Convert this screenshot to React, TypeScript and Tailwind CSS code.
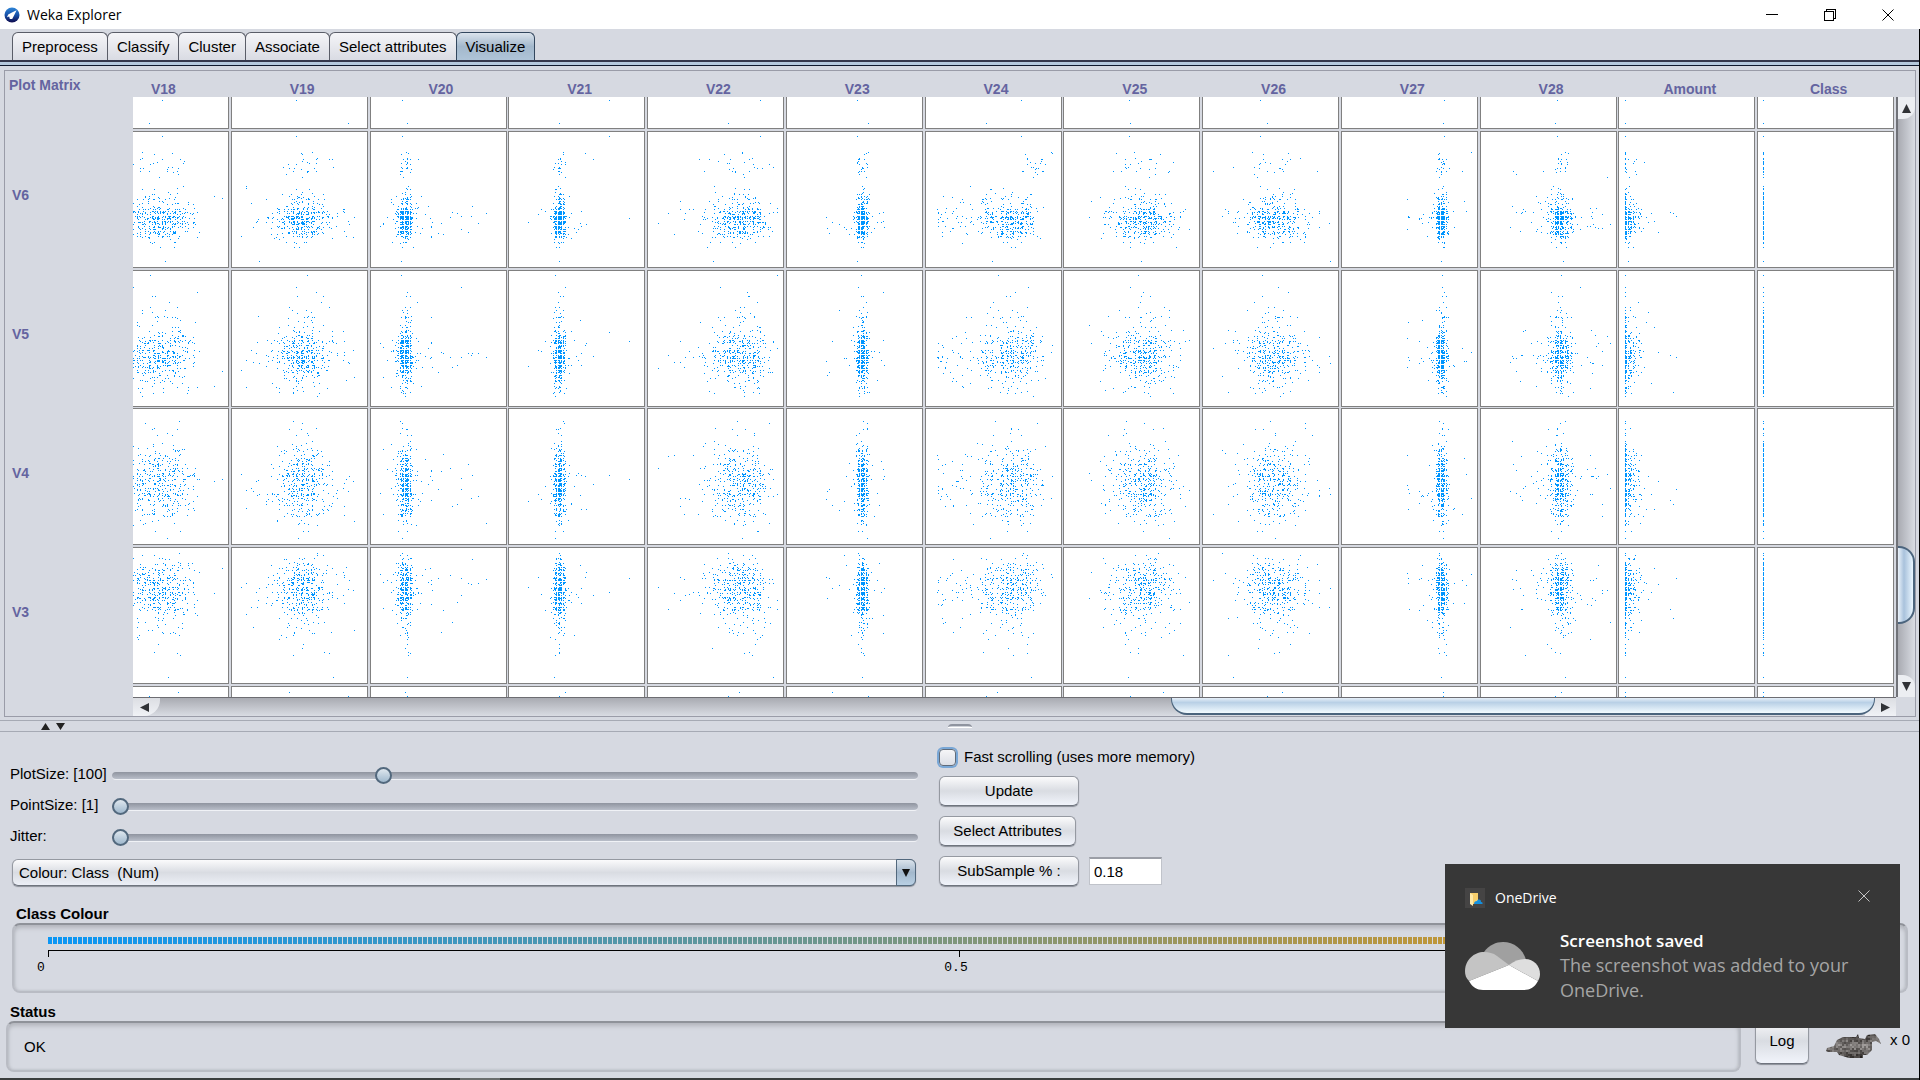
import React, { useMemo, useState } from "react";

const TABS = ["Preprocess", "Classify", "Cluster", "Associate", "Select attributes", "Visualize"];
const COLUMNS = ["V18", "V19", "V20", "V21", "V22", "V23", "V24", "V25", "V26", "V27", "V28", "Amount", "Class"];
const ROWS = ["V6", "V5", "V4", "V3"];

const PITCH = 138.75;
const VIEW_W = 1762;
const VIEW_H = 600;

function makeRandom(seed: number) {
  let s = seed;
  const uniform = () => {
    s = (s + 0x6d2b79f5) | 0;
    let t = Math.imul(s ^ (s >>> 15), 1 | s);
    t = (t + Math.imul(t ^ (t >>> 7), 61 | t)) ^ t;
    return ((t ^ (t >>> 14)) >>> 0) / 4294967296;
  };
  const normal = () => Math.sqrt(-2 * Math.log(uniform() + 1e-9)) * Math.cos(2 * Math.PI * uniform());
  return { uniform, normal };
}

// One entry per sampled record: its position inside a cell along every column and every row attribute.
function buildRecords() {
  const { uniform: u, normal: n } = makeRandom(2024);
  const tailed = (mean: number, sd: number, wide: number, share: number) =>
    mean + n() * (u() < share ? wide : sd);
  const records: { x: number[]; y: number[] }[] = [];
  for (let i = 0; i < 450; i++) {
    const high6 = u() < 0.055;
    const v24 = high6
      ? 112 + n() * 7
      : (() => {
          const k = u();
          if (k < 0.12) return 12 + u() * 38;
          if (k < 0.3) return 64 + n() * 5;
          if (k < 0.66) return 82 + n() * 6;
          return 100 + n() * 7;
        })();
    const x = [
      tailed(u() < 0.5 ? 58 : 78, 13, 34, 0.12),
      tailed(71, 13, 30, 0.18),
      tailed(36, 4, 22, 0.08) + (u() < 0.015 ? u() * 90 : 0),
      tailed(52, 3, 18, 0.05) + (u() < 0.015 ? u() * 80 : 0),
      u() < 0.02 ? 6 + u() * 50 : Math.min(130, (u() < 0.4 ? 80 : 101) + n() * 11),
      tailed(77, 3, 20, 0.05),
      v24,
      tailed(80, 16, 28, 0.13),
      tailed(u() < 0.6 ? 65 : 80, 11, 30, 0.17),
      tailed(101, 3, 20, 0.07),
      tailed(81, 5, 26, 0.14),
      8 + (u() < 0.55 ? 0 : -Math.log(u() + 1e-4) * 5) + (u() < 0.03 ? u() * 50 : 0),
      6.3,
    ];
    const y = [
      i === 0 ? 6 : i === 1 ? 131 : high6 ? 34 + n() * 7 : 90 + n() * 10 - (u() < 0.13 ? u() * 28 : 0),
      i === 2 ? 6 : 88 + n() * 14 - (u() < 0.12 ? u() * 55 : 0),
      i === 3 ? 131 : 76 + n() * 18 - (u() < 0.06 ? u() * 50 : 0),
      i === 4 ? 131 : 42 + n() * 16 + (u() < 0.15 ? u() * 50 : 0),
    ];
    records.push({ x, y });
  }
  return records;
}

const snap = (v: number) => Math.floor(Math.floor(v / 1.25) * 1.25);

function PlotMatrix() {
  const { dots, frames } = useMemo(() => {
    const records = buildRecords();
    const tops = [-105, 34, 173, 311, 450, 589];
    const frames: { x: number; y: number }[] = [];
    let dots = "";
    COLUMNS.forEach((_, c) => {
      const left = Math.round(-41 + c * PITCH);
      tops.forEach((top) => frames.push({ x: left, y: top }));
      const dot = (px: number, py: number) => {
        dots += `M${left + snap(px)} ${py}h1v1h-1z`;
      };
      records.forEach((r) => {
        const px = r.x[c];
        if (px < 6 || px > 132) return;
        for (let k = 0; k < 4; k++) {
          const py = r.y[k];
          if (py < 6 || py > 132) continue;
          dot(px, tops[k + 1] + snap(py));
        }
      });
      dot(records[0].x[c], 3);
      dot(records[7].x[c], 26);
      dot(records[8].x[c], 595);
      dot(records[7].x[c], 599);
    });
    return { dots, frames };
  }, []);
  return (
    <svg width={VIEW_W} height={VIEW_H} viewBox={`0 0 ${VIEW_W} ${VIEW_H}`} shapeRendering="crispEdges" className="block">
      {frames.map((f) => (
        <rect key={`${f.x}-${f.y}`} x={f.x + 0.5} y={f.y + 0.5} width={136} height={136} fill="#fff" stroke="#808080" />
      ))}
      <path d={dots} fill="#0095ff" />
    </svg>
  );
}

function Slider({ id, label, min, max, initial }: { id: string; label: string; min: number; max: number; initial: number }) {
  const [value, setValue] = useState(initial);
  return (
    <div className="flex h-[31px] items-center">
      <label htmlFor={id} className="w-[102px] whitespace-pre pb-1">
        {label}
      </label>
      <input
        id={id}
        type="range"
        min={min}
        max={max}
        value={value}
        onChange={(e) => setValue(Number(e.target.value))}
        className="h-4 min-w-0 flex-1 appearance-none bg-transparent [&::-webkit-slider-runnable-track]:h-2 [&::-webkit-slider-runnable-track]:rounded-full [&::-webkit-slider-runnable-track]:border-b [&::-webkit-slider-runnable-track]:border-[#f0f2f6] [&::-webkit-slider-runnable-track]:bg-linear-to-b [&::-webkit-slider-runnable-track]:from-[#8f949f] [&::-webkit-slider-runnable-track]:to-[#b9bec9] [&::-webkit-slider-thumb]:mt-[-5px] [&::-webkit-slider-thumb]:size-[17px] [&::-webkit-slider-thumb]:appearance-none [&::-webkit-slider-thumb]:rounded-full [&::-webkit-slider-thumb]:border-2 [&::-webkit-slider-thumb]:border-[#52687d] [&::-webkit-slider-thumb]:bg-linear-to-b [&::-webkit-slider-thumb]:from-[#dfe7ee] [&::-webkit-slider-thumb]:to-[#9fb8cd]"
      />
    </div>
  );
}

function PushButton({ children, className }: { children: React.ReactNode; className: string }) {
  return (
    <button
      type="button"
      className={`rounded-md border border-[#9599a1] border-b-[#6f747e] bg-linear-to-b from-[#fbfbfc] via-[#d9dce2] to-[#f1f4fb] shadow-[0_1px_1px_#8b8f98] ${className}`}
    >
      {children}
    </button>
  );
}

function WekaLogo() {
  return (
    <svg viewBox="0 0 16 16" className="size-4" aria-hidden="true">
      <defs>
        <linearGradient id="weka" x1="0" y1="0" x2="0" y2="1">
          <stop offset="0" stopColor="#2f86d8" />
          <stop offset=".5" stopColor="#1550a8" />
          <stop offset="1" stopColor="#0f0a4c" />
        </linearGradient>
      </defs>
      <circle cx="8" cy="8" r="7.5" fill="url(#weka)" />
      <path d="M12.6 3.2 8.4 5.2 4.2 7.6 3 10.2l2.2-.7.6 2.6 2.4-.2 1.7-3.2 1-2z" fill="#fff" />
    </svg>
  );
}

function WekaBird() {
  const pixels = useMemo(() => {
    const { uniform } = makeRandom(77);
    const out: { x: number; y: number; fill: string }[] = [];
    for (let y = 0; y < 26; y += 2)
      for (let x = 0; x < 56; x += 2) {
        const edge = Math.min(1, Math.abs(y - 11) / 14);
        const g = Math.round(132 - edge * 80 + (uniform() - 0.5) * 70 + (x > 42 && y < 8 ? 40 : 0));
        out.push({ x, y, fill: `rgb(${g},${g - 4},${g - 6})` });
      }
    return out;
  }, []);
  return (
    <svg viewBox="0 0 56 26" className="h-[26px] w-14" shapeRendering="crispEdges" role="img" aria-label="Weka bird">
      <clipPath id="bird">
        <path d="M0 17 1 14 8 12 11 6 17 3 30 3 32 0 33 4 39 5 41 1 49 0 53 5 55 10 50 7 46 8 46 16 41 21 37 21 37 24 23 24 13 21 11 18 2 18Z" />
      </clipPath>
      <g clipPath="url(#bird)">
        {pixels.map((p) => (
          <rect key={`${p.x}-${p.y}`} x={p.x} y={p.y} width="2" height="2" fill={p.fill} />
        ))}
      </g>
    </svg>
  );
}

function OneDriveCloud() {
  return (
    <svg viewBox="0 0 75 48" className="h-12 w-[75px] shrink-0" aria-hidden="true">
      <path d="M19 10C24 3 31 0 38 0c11 0 20 7 23 18L44 24Z" fill="#a0a0a0" />
      <path d="M19 10c5 0 9 1 13 4l12 9L4 39C1 36 0 33 0 29 0 18 9 10 19 10Z" fill="#c4c4c4" />
      <path d="M44 23c5-4 10-6 16-6 9 0 15 7 15 15 0 3-1 5-2 7Z" fill="#dedede" />
      <path d="M44 23 73 39c-3 6-8 9-14 9H18c-6 0-11-3-14-9Z" fill="#fff" />
    </svg>
  );
}

function Toast() {
  return (
    <aside className="absolute right-5 bottom-[52px] flex h-[164px] w-[455px] flex-col bg-[#373737] px-5 pt-6 font-['Open_Sans',sans-serif] text-white">
      <div className="flex h-5 items-center">
        <svg viewBox="0 0 20 20" className="size-5 bg-[#454444]" aria-hidden="true">
          <path d="M5 5h8v11H5z" fill="#f7cf6c" />
          <path d="m5 5 3 2v11l-3-2z" fill="#ffe9a8" />
          <path d="M9 16c0-2 1-3 3-3 1-2 4-2 4 1 2 0 2 2 1 2Z" fill="#1490df" />
        </svg>
        <span className="ml-2.5 flex-1 text-[14px] leading-5">OneDrive</span>
        <button type="button" aria-label="Dismiss" className="mr-2.5 pb-1">
          <svg viewBox="0 0 12 12" className="size-3" aria-hidden="true">
            <path d="M.5.5l11 11M11.500.5l-11 11" stroke="#c4c4c4" fill="none" />
          </svg>
        </button>
      </div>
      <div className="mt-5 flex items-center gap-5">
        <OneDriveCloud />
        <div className="text-[18px] leading-[25px]">
          <p className="text-[17px] font-semibold">Screenshot saved</p>
          <p className="whitespace-nowrap text-[#a5a5a5]">
            The screenshot was added to your
            <br />
            OneDrive.
          </p>
        </div>
      </div>
    </aside>
  );
}

export default function App() {
  const [tab, setTab] = useState("Visualize");
  return (
    <div className="relative flex min-h-screen flex-col overflow-hidden bg-[#d6d9e1] font-['Liberation_Sans',Arial,sans-serif] text-[15px] leading-5 text-black">
      <header className="flex h-[29px] items-center bg-white pl-1">
        <WekaLogo />
        <h1 className="ml-[7px] flex-1 font-['Open_Sans',sans-serif] text-[14px]">Weka Explorer</h1>
        <div className="flex items-center gap-[46px] pr-[26px]">
          <button type="button" aria-label="Minimize">
            <svg viewBox="0 0 12 12" className="size-3" shapeRendering="crispEdges">
              <path d="M0 5.500h12" stroke="#000" />
            </svg>
          </button>
          <button type="button" aria-label="Restore">
            <svg viewBox="0 0 12 12" className="size-3" fill="none" stroke="#000" shapeRendering="crispEdges">
              <path d="M.5 2.500h9v9h-9zM2.500 2.500v-2h9v9h-2" />
            </svg>
          </button>
          <button type="button" aria-label="Close">
            <svg viewBox="0 0 12 12" className="size-3" stroke="#000">
              <path d="M.5.5l11 11M11.500.5l-11 11" />
            </svg>
          </button>
        </div>
      </header>

      <div className="flex flex-1 flex-col border-r border-black">
        <nav className="flex h-[33px] items-end border-b-2 border-[#34364a] pl-3" role="tablist">
          {TABS.map((t) => (
            <button
              key={t}
              type="button"
              role="tab"
              aria-selected={t === tab}
              onClick={() => setTab(t)}
              className={
                t === tab
                  ? "-mr-px h-7 rounded-t-md border border-b-0 border-[#33475e] bg-linear-to-b from-[#dbe3ec] via-[#a3b8cc] to-[#afc4d8] px-[9px]"
                  : "-mr-px h-7 rounded-t-md border border-b-0 border-[#5a5d68] bg-linear-to-b from-[#f5f5f8] to-[#d9dbe3] px-[9px]"
              }
            >
              {t}
            </button>
          ))}
        </nav>
        <div className="h-1 border-b border-[#10182c] bg-[#b5c8dc]" />

        <section className="mt-1 mr-[3px] ml-1 flex flex-col border border-[#9a9ca8]">
          <div className="flex">
            <div className="w-32 shrink-0 pl-1 text-[14px] font-bold text-[#6464a0]">
              <h2 className="h-[54px] pt-1">Plot Matrix</h2>
              <ul className="pl-[3px]">
                {ROWS.map((r) => (
                  <li key={r} className="flex h-[139px] items-center">
                    {r}
                  </li>
                ))}
              </ul>
            </div>
            <div className="min-w-0 flex-1">
              <div className="flex h-[26px] items-end justify-end overflow-hidden pr-[17px]">
                <div className="grid w-[1804px] shrink-0 grid-cols-13 text-center text-[14px] leading-4 font-bold text-[#6464a0]">
                  {COLUMNS.map((c) => (
                    <span key={c}>{c}</span>
                  ))}
                </div>
              </div>
              <div className="flex">
                <div className="min-w-0 flex-1">
                  <div className="overflow-hidden">
                    <PlotMatrix />
                  </div>
                  <div className="flex h-[19px] border-t border-[#6d6d72] bg-linear-to-b from-[#a9abb2] to-[#d9dce3]">
                    <button type="button" aria-label="Scroll left" className="flex w-[27px] items-center rounded-br-2xl bg-linear-to-b from-[#dcdee3] to-[#f0f2f6] pl-[7px]">
                      <svg viewBox="0 0 9 9" className="size-[9px]">
                        <path d="M0 4.500 9 0v9z" fill="#303236" />
                      </svg>
                    </button>
                    <div className="flex flex-1 justify-end">
                      <div className="h-[17px] w-[70%] max-w-[704px] translate-x-[10px] rounded-b-2xl border border-t-0 border-b-2 border-[#4b647d] bg-linear-to-b from-[#e6eff8] via-[#b9d0e6] via-30% to-[#f3fbff]" />
                    </div>
                    <button type="button" aria-label="Scroll right" className="flex w-[31px] items-center justify-end bg-linear-to-b from-[#dcdee3] to-[#f0f2f6] pr-1.5">
                      <svg viewBox="0 0 9 9" className="size-[9px]">
                        <path d="M9 4.500 0 0v9z" fill="#303236" />
                      </svg>
                    </button>
                  </div>
                </div>
                <div className="mb-[19px] flex w-[19px] flex-col border-l-2 border-[#707278] bg-linear-to-r from-[#a9abb2] to-[#d9dce3]">
                  <button type="button" aria-label="Scroll up" className="flex h-[22px] items-center justify-center rounded-br-xl bg-[#eceef2]">
                    <svg viewBox="0 0 9 9" className="size-[9px]">
                      <path d="M4.500 0 9 9H0z" fill="#303236" />
                    </svg>
                  </button>
                  <div className="flex flex-1 flex-col justify-end pb-[51px]">
                    <div className="h-[78px] rounded-r-2xl border-2 border-l-0 border-[#4b647d] bg-linear-to-r from-[#eaf2fa] via-[#a9c2dc] via-40% to-[#eaf6ff]" />
                  </div>
                  <button type="button" aria-label="Scroll down" className="flex h-[22px] items-center justify-center rounded-tr-xl bg-[#eceef2]">
                    <svg viewBox="0 0 9 9" className="size-[9px]">
                      <path d="M0 0h9L4.500 9z" fill="#303236" />
                    </svg>
                  </button>
                </div>
              </div>
            </div>
          </div>
        </section>

        <div className="mt-[3px] flex h-3 items-center border-y border-[#a6aab4] pl-[41px]">
          <svg viewBox="0 0 24 7" className="h-[7px] w-6" aria-hidden="true">
            <path d="M4.500 0 9 7H0zM15 0h9l-4.500 7z" fill="#222" />
          </svg>
          <div className="mr-16 flex flex-1 justify-center">
            <div className="h-1 w-6 rounded-t border-t-2 border-b border-t-[#8f949f] border-b-white bg-[#cfd2d9]" />
          </div>
        </div>

        <form className="flex items-end pl-[10px]" onSubmit={(e) => e.preventDefault()}>
          <div className="w-[908px] max-w-1/2 shrink-0">
            <Slider id="plot-size" label="PlotSize: [100]" min={50} max={200} initial={100} />
            <Slider id="point-size" label="PointSize: [1]" min={1} max={10} initial={1} />
            <Slider id="jitter" label="Jitter:" min={0} max={50} initial={0} />
            <div className="relative mt-[6px] mr-[2px] ml-0.5">
              <select
                aria-label="Colour attribute"
                className="h-[27px] w-full appearance-none rounded-md border border-[#9599a1] border-b-[#6f747e] bg-linear-to-b from-[#fbfbfc] via-[#d9dce2] to-[#eceff6] pl-1.5 whitespace-pre shadow-[0_1px_1px_#8b8f98]"
              >
                <option>Colour: Class{"\u00a0\u00a0"}(Num)</option>
              </select>
              <span className="pointer-events-none absolute top-0 right-0 flex h-[27px] w-5 items-center justify-center rounded-r-md border border-[#52687d] bg-linear-to-b from-[#dbe3ec] via-[#a3b8cc] to-[#b9d0e4]">
                <svg viewBox="0 0 8 8" className="size-2">
                  <path d="M0 0h8L4 8z" fill="#111" />
                </svg>
              </span>
            </div>
          </div>
          <div className="ml-[21px] flex flex-col items-start gap-[10px] pt-4">
            <label className="flex h-[18px] items-center gap-2">
              <input
                type="checkbox"
                className="size-[17px] appearance-none rounded border border-[#5f6b7a] bg-linear-to-b from-[#f5f5f7] to-[#dcdfe6] shadow-[0_0_0_2px_#79a7d6]"
              />
              Fast scrolling (uses more memory)
            </label>
            <PushButton className="h-[30px] w-[140px]">Update</PushButton>
            <PushButton className="h-[30px] w-[137px]">Select Attributes</PushButton>
            <div className="flex items-center gap-[10px]">
              <PushButton className="h-[30px] w-[140px]">SubSample % :</PushButton>
              <input
                type="text"
                aria-label="SubSample percentage"
                defaultValue="0.18"
                className="h-7 w-[73px] border border-t-2 border-[#c0c3ca] border-t-[#9b9ea6] bg-white pl-1"
              />
            </div>
          </div>
        </form>

        <section className="mt-[18px] mr-[11px] ml-3">
          <h2 className="pl-1 font-bold">Class Colour</h2>
          <div className="-mt-px h-[70px] rounded-lg border-2 border-[#b9bcc4] border-t-[#8f9299] px-[34px] pt-3 shadow-[inset_0_3px_4px_#b4b7be,inset_0_0_3px_#b4b7be]">
            <div className="h-[7px] bg-[repeating-linear-gradient(90deg,transparent_0_1px,transparent_1px_4px,#d6d9e1_4px_5px),linear-gradient(90deg,#0a96f5,#f59600)]" />
            <div className="mt-[6px] flex h-[7px] border-x border-t border-black">
              <div className="w-1/2 border-r border-black" />
            </div>
            <div className="mx-[-30px] grid grid-cols-3 pt-[3px] font-['Liberation_Mono',monospace] text-[13px] leading-4">
              <span className="pl-[19px]">0</span>
              <span className="mr-2 text-center">0.5</span>
              <span className="pr-5 text-right">1</span>
            </div>
          </div>
        </section>

        <footer className="mt-[9px] flex items-end pr-[9px] pl-[6px]">
          <section className="min-w-0 flex-1">
            <h2 className="pl-1 font-bold">Status</h2>
            <div className="-mt-px flex h-[51px] items-center rounded-lg border-2 border-[#b9bcc4] border-t-[#8f9299] pl-4 shadow-[inset_0_3px_4px_#b4b7be,inset_0_0_3px_#b4b7be]">OK</div>
          </section>
          <PushButton className="mb-2 ml-[14px] h-[46px] w-[54px]">Log</PushButton>
          <div className="mb-3 ml-[17px] flex items-start gap-2">
            <WekaBird />
            <span className="mt-[-4px]">x 0</span>
          </div>
        </footer>
        <div className="mt-auto h-0.5 bg-[#3a3d3d]">
          <div className="ml-[460px] h-full w-10 bg-[#6b6e6e]" />
        </div>
      </div>
      <Toast />
    </div>
  );
}
